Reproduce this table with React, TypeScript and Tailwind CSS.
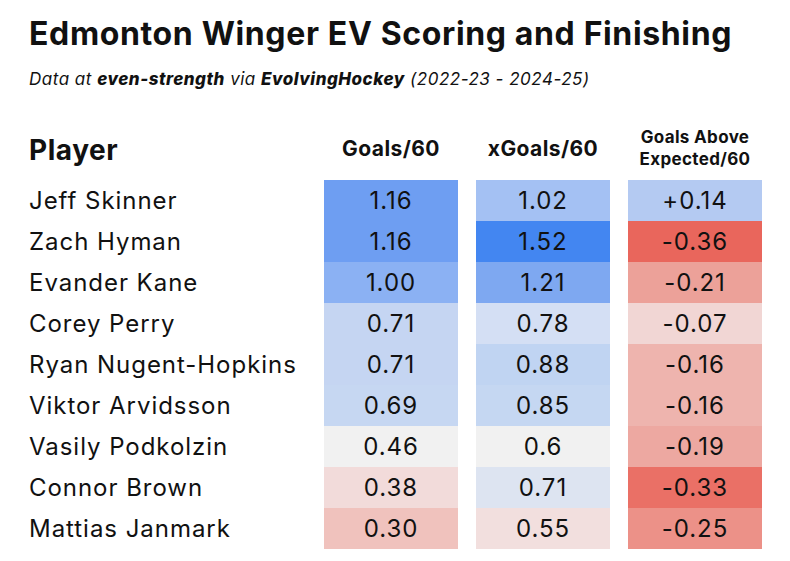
type Row = {
  name: string;
  goals: [string, string];
  xgoals: [string, string];
  gax: [string, string];
};

// cell colours follow the sheet's blue/grey/red colour scale
const rows: Row[] = [
  { name: "Jeff Skinner", goals: ["1.16", "bg-[#6e9ef2]"], xgoals: ["1.02", "bg-[#a4c1f3]"], gax: ["+0.14", "bg-[#b4caf2]"] },
  { name: "Zach Hyman", goals: ["1.16", "bg-[#6e9ef2]"], xgoals: ["1.52", "bg-[#4386f1]"], gax: ["-0.36", "bg-[#e9665c]"] },
  { name: "Evander Kane", goals: ["1.00", "bg-[#8bb1f3]"], xgoals: ["1.21", "bg-[#7ea8f1]"], gax: ["-0.21", "bg-[#eca199]"] },
  { name: "Corey Perry", goals: ["0.71", "bg-[#c5d5f2]"], xgoals: ["0.78", "bg-[#d4dff4]"], gax: ["-0.07", "bg-[#f1d6d4]"] },
  { name: "Ryan Nugent-Hopkins", goals: ["0.71", "bg-[#c5d5f2]"], xgoals: ["0.88", "bg-[#c0d4f2]"], gax: ["-0.16", "bg-[#eeb4ae]"] },
  { name: "Viktor Arvidsson", goals: ["0.69", "bg-[#c6d7f2]"], xgoals: ["0.85", "bg-[#c5d7f2]"], gax: ["-0.16", "bg-[#eeb4ae]"] },
  { name: "Vasily Podkolzin", goals: ["0.46", "bg-[#f1f1f1]"], xgoals: ["0.6", "bg-[#f1f1f1]"], gax: ["-0.19", "bg-[#eda8a1]"] },
  { name: "Connor Brown", goals: ["0.38", "bg-[#f2dbda]"], xgoals: ["0.71", "bg-[#dde4f1]"], gax: ["-0.33", "bg-[#ea7066]"] },
  { name: "Mattias Janmark", goals: ["0.30", "bg-[#f0c2bd]"], xgoals: ["0.55", "bg-[#f2dfde]"], gax: ["-0.25", "bg-[#ec9188]"] },
];

function Cell({ value }: { value: [string, string] }) {
  return (
    <div className={`h-[41px] flex items-center justify-center text-[24px] tracking-[0.04em] ${value[1]}`}>
      {value[0]}
    </div>
  );
}

export default function App() {
  return (
    <div className="w-[790px] h-[561px] bg-white text-[#111] pl-[29px] font-['Inter',sans-serif]">
      <h1 className="pt-[18px] text-[32px] leading-none font-bold tracking-[0.02em]">
        Edmonton Winger EV Scoring and Finishing
      </h1>
      <p className="mt-[21px] text-[17px] leading-none italic tracking-[0.03em]">
        Data at <b className="font-extrabold">even-strength</b> via <b className="font-extrabold">EvolvingHockey</b> (2022-23 - 2024-25)
      </p>

      <div className="grid grid-cols-[277px_134px_134px_134px] gap-x-[18px]">
        <div className="h-[92px] flex items-end pb-[12px] text-[28px] leading-[1.2] font-bold tracking-[0.02em]">
          Player
        </div>
        <div className="h-[92px] flex items-end justify-center pb-[19px] text-[21px] leading-[1.2] font-bold tracking-[0.02em]">
          Goals/60
        </div>
        <div className="h-[92px] flex items-end justify-center pb-[19px] text-[21px] leading-[1.2] font-bold tracking-[0.02em]">
          xGoals/60
        </div>
        <div className="h-[92px] flex items-end justify-center pb-[10px] text-[17px] leading-[22px] font-bold tracking-[0.02em] text-center">
          Goals Above
          <br />
          Expected/60
        </div>

        {rows.map((r) => (
          <div key={r.name} className="contents">
            <div className="h-[41px] flex items-center text-[24px] tracking-[0.04em]">{r.name}</div>
            <Cell value={r.goals} />
            <Cell value={r.xgoals} />
            <Cell value={r.gax} />
          </div>
        ))}
      </div>
    </div>
  );
}
